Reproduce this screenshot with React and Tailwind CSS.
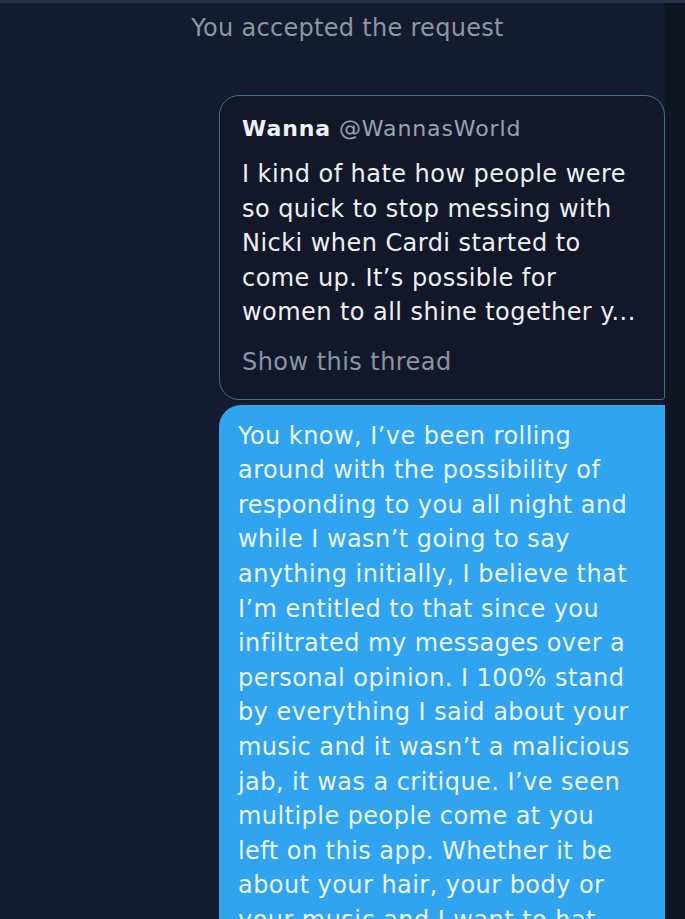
const quoteLines = [
  "I kind of hate how people were",
  "so quick to stop messing with",
  "Nicki when Cardi started to",
  "come up. It’s possible for",
  "women to all shine together y...",
];

const replyLines = [
  "You know, I’ve been rolling",
  "around with the possibility of",
  "responding to you all night and",
  "while I wasn’t going to say",
  "anything initially, I believe that",
  "I’m entitled to that since you",
  "infiltrated my messages over a",
  "personal opinion. I 100% stand",
  "by everything I said about your",
  "music and it wasn’t a malicious",
  "jab, it was a critique. I’ve seen",
  "multiple people come at you",
  "left on this app. Whether it be",
  "about your hair, your body or",
  "your music and I want to hat",
];

export default function App() {
  return (
    <div
      className="w-[685px] h-[919px] overflow-hidden flex bg-[#141b2e] border-t-[3px] border-[#26324a]"
      style={{ fontFamily: '"DejaVu Sans", "Liberation Sans", sans-serif' }}
    >
      <div className="flex-1 flex flex-col">
        {/* System notice */}
        <div className="pl-[30px] pt-[8px] text-center text-[24px] leading-[34px] tracking-[0.3px] text-[#8d97a6]">
          You accepted the request
        </div>

        <div className="ml-auto w-[446px] mt-[50px] flex flex-col gap-[5px]">
          {/* Quoted tweet */}
          <div className="border-[1.5px] border-[#3e6d8e] rounded-[20px] rounded-br-[3px] bg-[#121829] pl-[22px] pr-[8px] pt-[19px] pb-[19px]">
            <div className="text-[22px] leading-[28px] tracking-[0.9px] text-[#eef0f3]">
              <span className="font-bold">Wanna</span>{" "}
              <span className="text-[#9aa3b0]">@WannasWorld</span>
            </div>
            <div className="mt-[14px] text-[24px] leading-[34.6px] tracking-[0.45px] text-[#eef0f3]">
              {quoteLines.map((line) => (
                <div key={line} className="whitespace-nowrap">
                  {line}
                </div>
              ))}
            </div>
            <div className="mt-[15px] text-[24px] leading-[34.6px] tracking-[0.45px] text-[#8c95a3]">
              Show this thread
            </div>
          </div>

          {/* Reply bubble */}
          <div className="bg-[#30a4ef] rounded-tl-[22px] pl-[19px] pt-[14px] pb-[20px] text-[24px] leading-[34.6px] tracking-[0.45px] text-[#eaf5fc]">
            {replyLines.map((line) => (
              <div key={line} className="whitespace-nowrap">
                {line}
              </div>
            ))}
          </div>
        </div>
      </div>
      <div className="w-[20px] bg-[#0f1523]" />
    </div>
  );
}
